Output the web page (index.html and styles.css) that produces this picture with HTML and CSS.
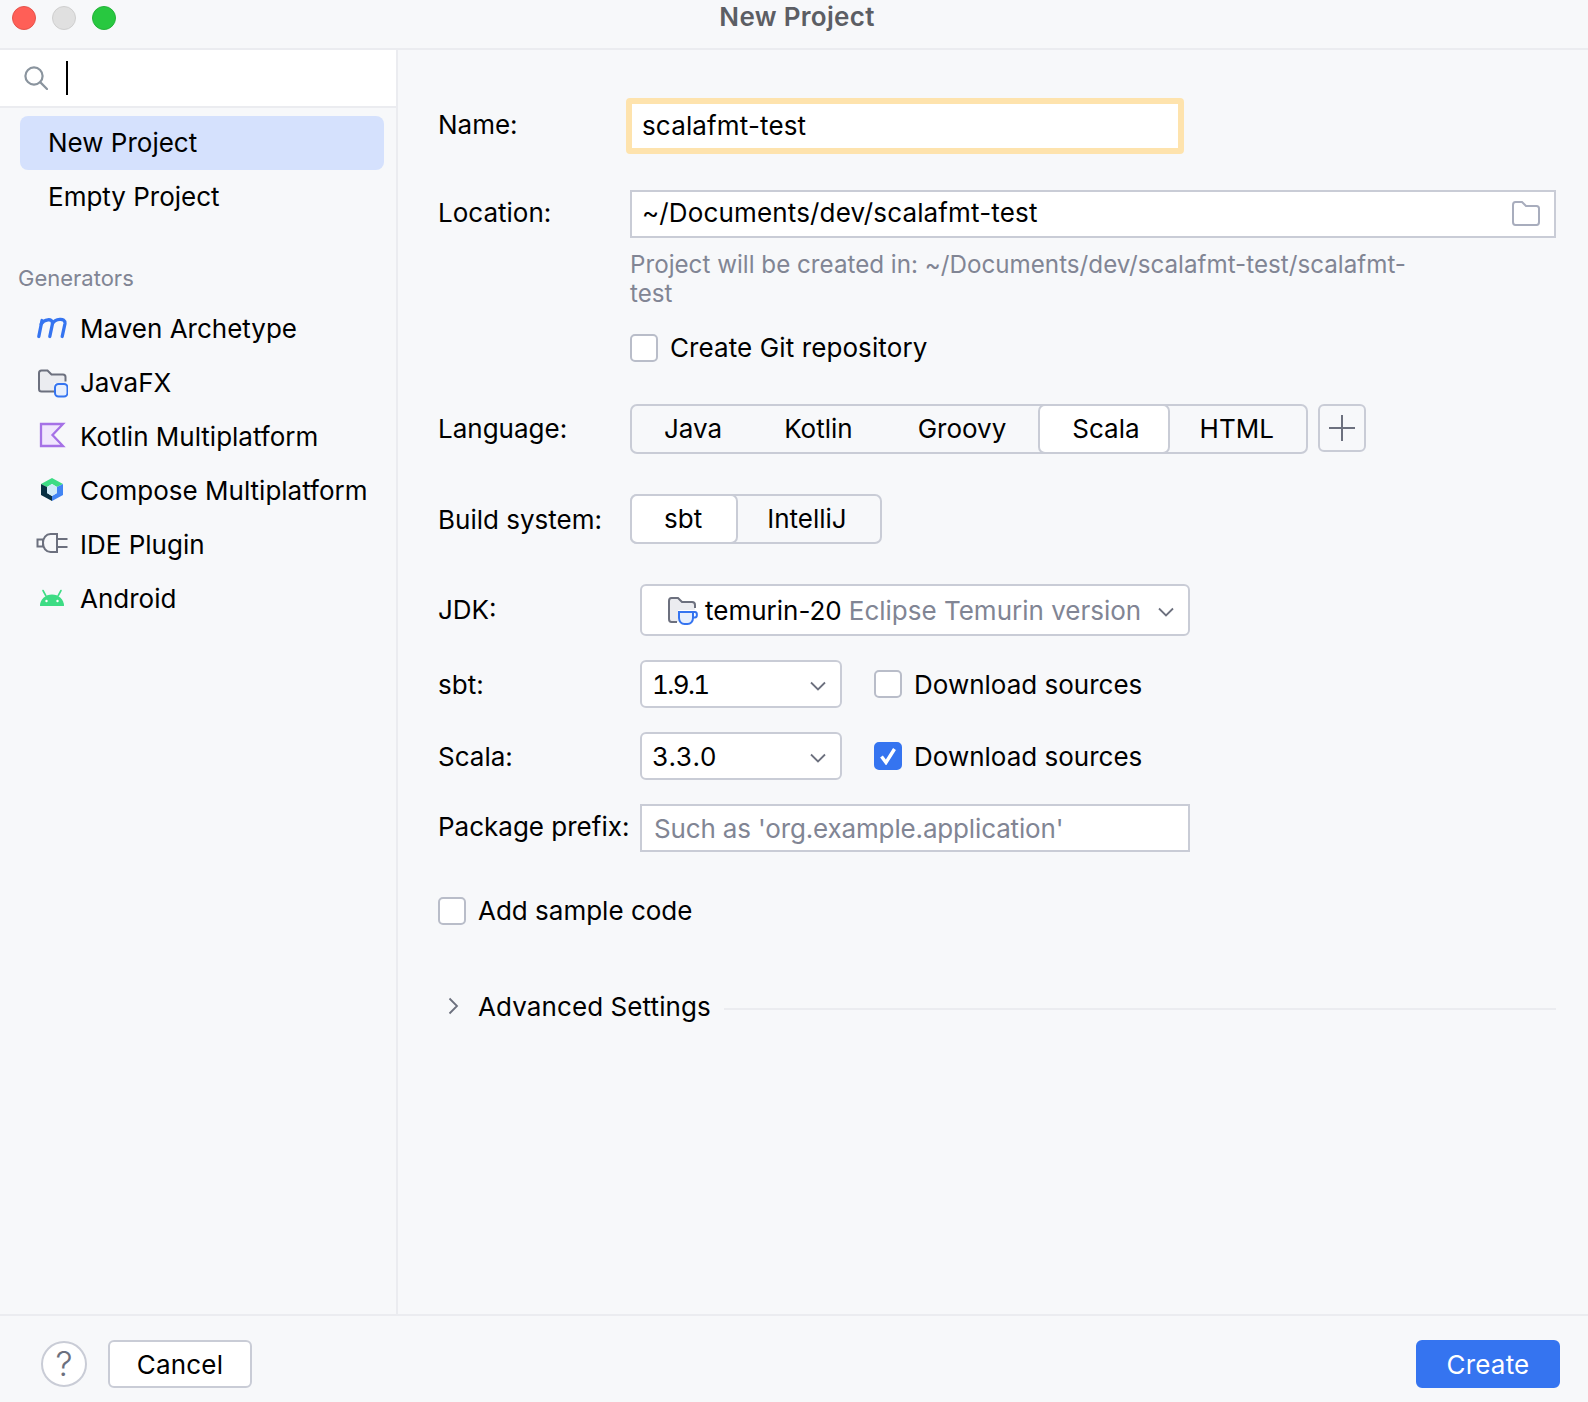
FILE: index.html
```html
<!DOCTYPE html>
<html lang="en">

<head>
    <meta charset="UTF-8">
    <title>New Project</title>
    <link rel="stylesheet" href="styles.css">
</head>

<body>
    <div class="window">
        <header class="titlebar">
            <div class="lights">
                <span class="light light-red"></span>
                <span class="light light-gray"></span>
                <span class="light light-green"></span>
            </div>
            <div class="title">New Project</div>
        </header>

        <div class="content">
            <aside class="sidebar">
                <div class="search">
                    <svg class="search-icon" width="24" height="24" viewBox="0 0 24 24" fill="none" stroke="#8a949e" stroke-width="2.2">
                        <circle cx="10" cy="10" r="8.6"/>
                        <path d="M16.4 16.4L23 23" stroke-linecap="round"/>
                    </svg>
                    <span class="caret"></span>
                </div>

                <ul class="nav">
                    <li class="nav-item selected">New Project</li>
                    <li class="nav-item">Empty Project</li>
                </ul>

                <div class="nav-heading">Generators</div>

                <ul class="generators">
                    <li class="gen-item">
                        <svg class="gen-icon" width="32" height="32" viewBox="0 0 32 32" fill="none" stroke="#3574f0" stroke-width="3.3" stroke-linecap="round">
                            <path d="M2.8 24.5L6 8.5"/>
                            <path d="M5.2 12C8 7.5 16.5 5.5 16.5 11.5L13.8 24.5"/>
                            <path d="M16.5 11.5C19 7 29.5 5 29 11.5L26.2 24.5"/>
                        </svg>
                        Maven Archetype
                    </li>
                    <li class="gen-item">
                        <svg class="gen-icon" width="32" height="32" viewBox="0 0 32 32" fill="none">
                            <path d="M3 7C3 5.3 4 4.5 5.5 4.5H11.5L15.5 8.5H27C28.7 8.5 29.5 9.5 29.5 11V17H18V26H5.5C4 26 3 25 3 23.5Z" fill="#ebecf0"/>
                            <path d="M18 25.5H5.5C4 25.5 3 24.5 3 23V7C3 5.3 4 4.5 5.5 4.5H11.5L15.5 8.5H27C28.7 8.5 29.5 9.5 29.5 11V15.5" stroke="#6c707e" stroke-width="2"/>
                            <rect x="19" y="18" width="12.5" height="12.5" rx="3.5" fill="#e7effd" stroke="#3574f0" stroke-width="2"/>
                        </svg>
                        JavaFX
                    </li>
                    <li class="gen-item">
                        <svg class="gen-icon" width="32" height="32" viewBox="0 0 32 32">
                            <path d="M5 4H27L16.5 15L27 26H5Z" fill="#f0e6fd" stroke="#a571e6" stroke-width="2.3"/>
                        </svg>
                        Kotlin Multiplatform
                    </li>
                    <li class="gen-item">
                        <svg class="gen-icon" width="32" height="32" viewBox="0 0 32 32">
                            <path d="M16 4L27 10L21 13L16 10L11 13L5 10Z" fill="#3ddc84"/>
                            <path d="M5 10L11 13V19L16 22V27L5 21Z" fill="#083042"/>
                            <path d="M27 10L21 13V19L16 22V27L27 21Z" fill="#4285f4"/>
                            <path d="M16 10L21 13V19L16 22L11 19V13Z" fill="#cfeaf8"/>
                        </svg>
                        Compose Multiplatform
                    </li>
                    <li class="gen-item">
                        <svg class="gen-icon" width="32" height="32" viewBox="0 0 32 32" fill="none" stroke="#6c707e" stroke-width="2">
                            <path d="M1.5 11.5H7V18.5H1.5Z"/>
                            <path d="M21 6H14.5C10 6 7 10 7 15C7 20 10 24 14.5 24H21Z"/>
                            <path d="M21 11H31.5M21 19H31.5"/>
                        </svg>
                        IDE Plugin
                    </li>
                    <li class="gen-item">
                        <svg class="gen-icon" width="32" height="32" viewBox="0 0 32 32">
                            <path d="M4 24A12 11.5 0 0 1 28 24Z" fill="#3ddc84"/>
                            <path d="M10 14L7 8.5M22 14L25 8.5" stroke="#3ddc84" stroke-width="1.6" stroke-linecap="round"/>
                            <circle cx="10.5" cy="19" r="1.2" fill="#fff"/>
                            <circle cx="21.5" cy="19" r="1.2" fill="#fff"/>
                        </svg>
                        Android
                    </li>
                </ul>
            </aside>

            <main class="form">
                <div class="row">
                    <label class="label label-up">Name:</label>
                    <div class="field field-focus">scalafmt-test</div>
                </div>

                <div class="row row-location">
                    <label class="label label-up">Location:</label>
                    <div class="field field-path">
                        <span class="path-text">~/Documents/dev/scalafmt-test</span>
                        <svg class="folder-icon" width="28" height="25" viewBox="0 0 28 25" fill="none" stroke="#a8adbd" stroke-width="2">
                            <path d="M1 4C1 2.3 2 1 3.5 1H10L14 5H24.5C26 5 27 6 27 7.5V21C27 22.8 26 24 24.5 24H3.5C2 24 1 22.8 1 21Z"/>
                        </svg>
                    </div>
                </div>

                <div class="hint">Project will be created in: ~/Documents/dev/scalafmt-test/scalafmt-test</div>

                <div class="check-row git-row">
                    <span class="checkbox"></span>
                    Create Git repository
                </div>

                <div class="row row-language">
                    <label class="label label-nudge">Language:</label>
                    <div class="seg-line">
                        <div class="seg">
                            <span class="seg-item seg-java">Java</span>
                            <span class="seg-item seg-kotlin">Kotlin</span>
                            <span class="seg-item seg-groovy">Groovy</span>
                            <span class="seg-item active">Scala</span>
                            <span class="seg-item">HTML</span>
                        </div>
                        <div class="add-btn">
                            <svg width="26" height="26" viewBox="0 0 26 26" stroke="#6c707e" stroke-width="2">
                                <path d="M13 0V26M0 13H26"/>
                            </svg>
                        </div>
                    </div>
                </div>

                <div class="row row-build">
                    <label class="label">Build system:</label>
                    <div class="seg-line">
                        <div class="seg seg-build">
                            <span class="seg-item active">sbt</span>
                            <span class="seg-item">IntelliJ</span>
                        </div>
                    </div>
                </div>

                <div class="row row-wide row-jdk">
                    <label class="label label-nudge">JDK:</label>
                    <div class="select select-jdk">
                        <svg class="jdk-icon" width="30" height="28" viewBox="0 0 30 28" fill="none">
                            <path d="M1 4C1 2 2 1 3.5 1H10L14 5H24C25.8 5 27 6 27 8V13H10V25H3.5C2 25 1 24 1 22Z" fill="#ebecf0"/>
                            <path d="M9 25H3.5C2 25 1 24 1 22V4C1 2 2 1 3.5 1H10L14 5H24C25.8 5 27 6 27 8V11" stroke="#6c707e" stroke-width="2"/>
                            <path d="M11 15H25V21C25 24.5 22.5 27 19.5 27H16.5C13.5 27 11 24.5 11 21Z" fill="#e7effd" stroke="#3574f0" stroke-width="2"/>
                            <path d="M25 15H27C29.5 15 29.5 20.5 27 20.5H24.5" stroke="#3574f0" stroke-width="2"/>
                        </svg>
                        <span class="jdk-name">temurin-20</span>
                        <span class="muted">Eclipse Temurin version</span>
                        <svg class="chevron" width="16" height="10" viewBox="0 0 16 10" fill="none" stroke="#6c707e" stroke-width="1.8">
                            <path d="M1 1.5L8 8.5L15 1.5"/>
                        </svg>
                    </div>
                </div>

                <div class="row row-wide row-tool">
                    <label class="label">sbt:</label>
                    <div class="tool-line">
                        <div class="select select-version version-narrow">
                            1.9.1
                            <svg class="chevron" width="16" height="10" viewBox="0 0 16 10" fill="none" stroke="#6c707e" stroke-width="1.8">
                                <path d="M1 1.5L8 8.5L15 1.5"/>
                            </svg>
                        </div>
                        <div class="check-row">
                            <span class="checkbox"></span>
                            Download sources
                        </div>
                    </div>
                </div>

                <div class="row row-wide row-tool">
                    <label class="label">Scala:</label>
                    <div class="tool-line">
                        <div class="select select-version">
                            3.3.0
                            <svg class="chevron" width="16" height="10" viewBox="0 0 16 10" fill="none" stroke="#6c707e" stroke-width="1.8">
                                <path d="M1 1.5L8 8.5L15 1.5"/>
                            </svg>
                        </div>
                        <div class="check-row">
                            <span class="checkbox checked">
                                <svg width="18" height="18" viewBox="0 0 18 18" fill="none" stroke="#fff" stroke-width="3.4">
                                    <path d="M2.5 9.5L7 15.5L15.5 2"/>
                                </svg>
                            </span>
                            Download sources
                        </div>
                    </div>
                </div>

                <div class="row row-wide row-tool">
                    <label class="label label-up">Package prefix:</label>
                    <div class="field field-prefix">Such as 'org.example.application'</div>
                </div>

                <div class="check-row sample-row">
                    <span class="checkbox"></span>
                    Add sample code
                </div>

                <div class="advanced">
                    <svg class="advanced-arrow" width="11" height="18" viewBox="0 0 11 18" fill="none" stroke="#6c707e" stroke-width="1.8">
                        <path d="M1.5 1.5L9 9L1.5 16.5"/>
                    </svg>
                    <span>Advanced Settings</span>
                    <span class="advanced-line"></span>
                </div>
            </main>
        </div>

        <footer class="footer">
            <div class="footer-left">
                <div class="help">?</div>
                <button class="btn">Cancel</button>
            </div>
            <button class="btn btn-primary">Create</button>
        </footer>
    </div>
</body>

</html>
```

FILE: styles.css
```css
body {
    margin: 0;
    background-color: #f7f8fa;
    font-family: Inter, "Noto Sans", sans-serif;
    font-size: 26px;
    color: #000;
}

ul {
    list-style: none;
    margin: 0;
    padding: 0;
}

.window {
    display: flex;
    flex-direction: column;
    height: 1402px;
    overflow: hidden;
}

/* title bar */
.titlebar {
    position: relative;
    flex: none;
    height: 48px;
    border-bottom: 2px solid #ebecf0;
}

.lights {
    display: flex;
    gap: 16px;
    padding: 6px 0 0 12px;
}

.light {
    width: 24px;
    height: 24px;
    border-radius: 50%;
    box-sizing: border-box;
}

.light-red {
    background-color: #ff5f57;
    border: 1px solid #e5534b;
}

.light-gray {
    background-color: #e0e0e0;
    border: 1px solid #cfcfcf;
}

.light-green {
    background-color: #28c840;
    border: 1px solid #24b339;
}

.title {
    position: absolute;
    top: 0;
    left: 6px;
    right: 0;
    text-align: center;
    line-height: 34px;
    font-weight: 600;
    letter-spacing: 0.3px;
    color: #5c5e64;
}

.content {
    flex: 1;
    display: flex;
    min-height: 0;
}

/* left side */
.sidebar {
    flex: none;
    width: 396px;
    border-right: 2px solid #ebecf0;
}

.search {
    display: flex;
    align-items: center;
    height: 56px;
    padding-left: 24px;
    background-color: #fff;
    border-bottom: 2px solid #ebecf0;
}

.caret {
    width: 2px;
    height: 34px;
    margin-left: 18px;
    background-color: #000;
}

.nav {
    margin-top: 8px;
}

.nav-item {
    height: 54px;
    line-height: 54px;
    margin: 0 12px 0 20px;
    padding-left: 28px;
    border-radius: 8px;
}

.nav-item.selected {
    background-color: #d5e1fd;
}

.nav-heading {
    margin: 40px 0 9px 18px;
    line-height: 28px;
    font-size: 22px;
    color: #818594;
}

.gen-item {
    display: flex;
    align-items: center;
    gap: 12px;
    height: 54px;
    padding-left: 36px;
}

/* form */
.form {
    flex: 1;
    min-width: 0;
    padding: 48px 32px 0 40px;
}

.row {
    display: grid;
    grid-template-columns: 192px 1fr;
    align-items: center;
}

.row-wide {
    grid-template-columns: 202px 1fr;
}

.row-location {
    margin-top: 36px;
}

.row-language {
    margin-top: 41px;
}

.row-build,
.row-jdk {
    margin-top: 40px;
}

.row-tool {
    margin-top: 24px;
}

.label {
    white-space: nowrap;
}

.label-up {
    margin-bottom: 4px;
}

.label-nudge {
    margin-bottom: 2px;
}

.field {
    box-sizing: border-box;
    height: 48px;
    padding: 0 10px;
    line-height: 42px;
    letter-spacing: 0.15px;
    background-color: #fff;
    border: 2px solid #c9ccd6;
}

.field-focus {
    width: 558px;
    height: 56px;
    margin-left: -4px;
    line-height: 44px;
    border: 6px solid #fee3ad;
    border-radius: 4px;
}

.field-path {
    display: flex;
    justify-content: space-between;
    align-items: center;
    padding-right: 14px;
}

.path-text {
    margin-bottom: 2px;
}

.folder-icon {
    margin-bottom: 1px;
}

.field-prefix {
    width: 550px;
    padding-left: 12px;
    line-height: 46px;
    letter-spacing: -0.15px;
    color: #818594;
}

.hint {
    width: 790px;
    margin: 13px 0 0 192px;
    line-height: 28.5px;
    font-size: 24.2px;
    color: #818594;
}

.check-row {
    display: flex;
    align-items: center;
    gap: 12px;
}

.git-row {
    margin: 24px 0 0 192px;
    letter-spacing: 0.1px;
}

.sample-row {
    margin-top: 43px;
}

.checkbox {
    display: flex;
    align-items: center;
    justify-content: center;
    box-sizing: border-box;
    width: 28px;
    height: 28px;
    background-color: #fff;
    border: 2px solid #b9bdc9;
    border-radius: 5px;
}

.checkbox.checked {
    background-color: #3574f0;
    border-color: #3574f0;
}

.seg-line {
    display: flex;
    align-items: flex-start;
    gap: 10px;
}

.seg {
    display: flex;
    box-sizing: border-box;
    height: 50px;
    border: 2px solid #c9ccd6;
    border-radius: 7px;
}

.seg-item {
    padding: 0 32px;
    line-height: 46px;
}

.seg-java {
    padding-right: 30px;
}

.seg-kotlin {
    padding-right: 33px;
}

.seg-groovy {
    padding-right: 34px;
}

.seg-item.active {
    margin: -2px;
    padding: 0 28px 0 32px;
    background-color: #fff;
    border: 2px solid #c9ccd6;
    border-radius: 7px;
}

.seg-build .seg-item {
    padding: 0 33px 0 31px;
}

.seg-build .seg-item.active {
    padding: 0 34px 0 32px;
}

.add-btn {
    display: flex;
    align-items: center;
    justify-content: center;
    box-sizing: border-box;
    width: 48px;
    height: 48px;
    border: 2px solid #c9ccd6;
    border-radius: 6px;
}

.select {
    display: flex;
    align-items: center;
    box-sizing: border-box;
    background-color: #fff;
    border: 2px solid #c9ccd6;
    border-radius: 6px;
}

.select-jdk {
    width: 550px;
    height: 52px;
    padding: 1px 14px 0 26px;
}

.jdk-name {
    margin-left: 7px;
}

.muted {
    margin-left: 7px;
    color: #818594;
}

.chevron {
    margin: 3px 0 0 auto;
}

.select-version {
    width: 202px;
    height: 48px;
    padding: 0 14px 0 10px;
    font-variant-numeric: tabular-nums;
}

.version-narrow {
    letter-spacing: -1.6px;
}

.tool-line {
    display: flex;
    align-items: center;
    gap: 32px;
}

.advanced {
    display: flex;
    align-items: center;
    margin-top: 61px;
    height: 38px;
    letter-spacing: 0.1px;
}

.advanced-arrow {
    margin: 0 19px 0 10px;
}

.advanced-line {
    flex: 1;
    height: 2px;
    margin: 6px 0 0 13px;
    background-color: #ebecf0;
}

/* bottom buttons */
.footer {
    flex: none;
    display: flex;
    justify-content: space-between;
    align-items: flex-start;
    height: 88px;
    padding: 24px 28px 0 41px;
    box-sizing: border-box;
    border-top: 2px solid #ebecf0;
}

.footer-left {
    display: flex;
    align-items: center;
    gap: 21px;
}

.help {
    box-sizing: border-box;
    width: 46px;
    height: 46px;
    line-height: 42px;
    text-align: center;
    font-size: 34px;
    font-weight: 300;
    color: #6c707e;
    background-color: #fff;
    border: 2px solid #c9ccd6;
    border-radius: 50%;
}

.btn {
    box-sizing: border-box;
    width: 144px;
    height: 48px;
    padding: 0;
    font-family: inherit;
    font-size: 26px;
    letter-spacing: 0.2px;
    color: #000;
    background-color: #fff;
    border: 2px solid #c9ccd6;
    border-radius: 6px;
}

.btn-primary {
    color: #fff;
    background-color: #3574f0;
    border-color: #3574f0;
}
```
